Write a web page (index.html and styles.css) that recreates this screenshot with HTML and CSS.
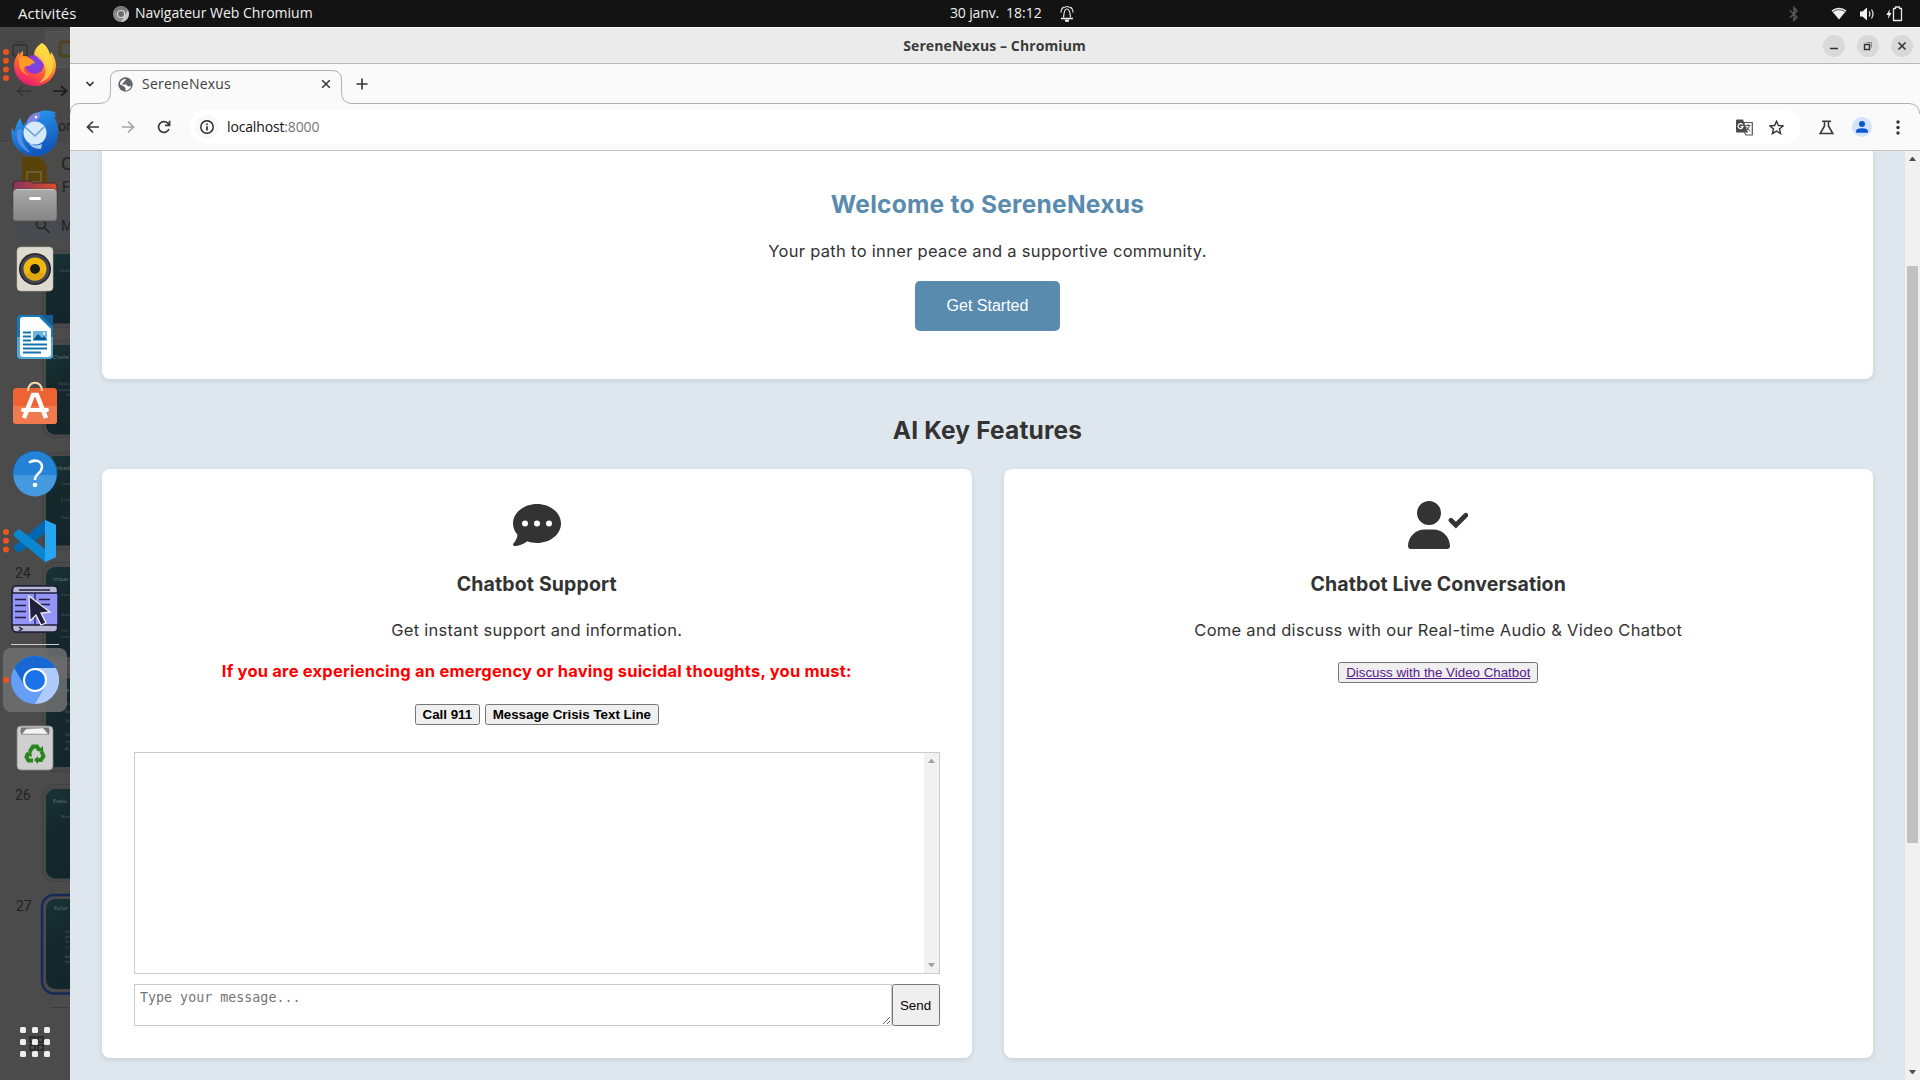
FILE: index.html
```
<!DOCTYPE html>
<html lang="fr">
<head>
<meta charset="utf-8">
<title>SereneNexus</title>
<link rel="stylesheet" href="styles.css">
</head>
<body>
<header class="topbar">
  <div class="topbar-left">
    <span class="activities">Activités</span>
    <svg class="app-icon" width="16" height="16" viewBox="0 0 16 16"><circle cx="8" cy="8" r="8" fill="#8c8c8c"/><path d="M8 8 1.2 4A8 8 0 0 1 15 4.2L8 4z" fill="#777"/><path d="M8 16 11.5 10 15 4.200A8 8 0 0 1 8 16z" fill="#c8c8c8"/><circle cx="8" cy="8" r="4" fill="#ddd"/><circle cx="8" cy="8" r="3" fill="#6c6c6c"/></svg>
    <span class="app-name">Navigateur Web Chromium</span>
  </div>
  <div class="topbar-center">
    <span class="date">30 janv.</span><span class="time">18:12</span>
    <svg width="14" height="17" viewBox="0 0 14 17" fill="none" stroke="#e8e8e8" stroke-width="1.2"><path d="M3.500 12.500C4 10 3.600 4 7 4s3 6 3.500 8.500"/><path d="M1 13.500h12" stroke-width="1.600"/><path d="M1 7.500C1 5 2 3 3.800 1.900M13 7.500C13 5 12 3 10.200 1.900M4.500 3C5 1 9 1 9.500 3"/><path d="M5.500 15.200a1.500 1.300 0 0 0 3 0z" fill="#e8e8e8"/></svg>
  </div>
  <div class="topbar-right">
    <svg width="10" height="16" viewBox="0 0 10 16" fill="none" stroke="#5a5a5a" stroke-width="1.400"><path d="M1 4.500 8 11 5 14.500V1.500L8 5 1 11.500"/></svg>
    <svg class="wifi" width="16" height="13" viewBox="0 0 16 13"><path d="M.5 3.500Q8-2 15.500 3.500L8 12.500z" fill="#f2f2f2"/><path d="M2 4.600Q8 .8 14 4.600" fill="none" stroke="#555" stroke-width="1"/></svg>
    <svg class="sound" width="16" height="14" viewBox="0 0 16 14"><path d="M1 4.500h2.500L8 .5v13L3.500 9.500H1z" fill="#f2f2f2"/><path d="M10 4.500q1.800 2.500 0 5M12.500 2.500q3 4.500 0 9" fill="none" stroke="#ddd" stroke-width="1.300"/></svg>
    <svg class="battery" width="17" height="16" viewBox="0 0 17 16"><path d="M4 3 .3 9H2.500L2 13 5.500 7H3.400z" fill="#f2f2f2"/><path d="M7.500 2.500h2V1h4v1.500h2v12h-8z" fill="none" stroke="#e6e6e6" stroke-width="1.300" stroke-linejoin="round"/></svg>
  </div>
</header>

<div class="desktop">
<nav class="dock">
  <svg class="backdrop" width="70" height="1053" viewBox="0 27 70 1053">
    <defs><linearGradient id="slide" x1="0" y1="0" x2=".5" y2="1"><stop offset="0" stop-color="#193336"/><stop offset=".4" stop-color="#15292d"/><stop offset="1" stop-color="#12252c"/></linearGradient></defs>
    <path d="M0 27h42v34q0 6 6 6h22v72H0z" fill="#484848"/><path d="M42.500 27v35M0 140.500h70" stroke="#414141"/>
    <rect x="46.500" y="31.500" width="40" height="36" rx="3" fill="#505050" stroke="#565656"/>
    <path d="M70 42h-8q-2 0-2 2v10q0 2 2 2h8" fill="none" stroke="#51431e" stroke-width="3"/>
    <rect x="13" y="45" width="14" height="11" rx="1.500" fill="none" stroke="#303030" stroke-width="1.500"/><path d="M15 42h10" stroke="#303030"/>
    <path d="M31 91H18M23 86l-5.500 5 5.500 5" fill="none" stroke="#353535" stroke-width="1.500"/><path d="M53 91h13M61 86l5.500 5-5.500 5" fill="none" stroke="#1d1d1d" stroke-width="1.700"/>
    <text x="58" y="131" class="ghost" font-size="14">or</text>
    <path d="M22 157h17l8 8v25H22z" fill="#5a4309"/><rect x="27" y="172" width="14" height="10" fill="none" stroke="#6c5d37" stroke-width="2"/>
    <text x="61" y="170" class="ghost big">C</text><text x="62" y="192" class="ghost">F</text>
    <path d="M70 212H31q-14 0-14 14t14 13h39" fill="#474a4e"/><circle cx="41" cy="224" r="4.500" fill="none" stroke="#222" stroke-width="1.500"/><path d="m44 227 6 6" stroke="#222" stroke-width="1.500"/><text x="61" y="231" class="ghost">M</text>
    <g fill="#494949" stroke="#414141"><rect x="42.500" y="250.500" width="60" height="77" rx="12"/><rect x="42.500" y="340.500" width="60" height="97" rx="12"/><rect x="42.500" y="452.500" width="60" height="97" rx="12"/><rect x="42.500" y="562.500" width="60" height="98" rx="12"/><rect x="42.500" y="674.500" width="60" height="97" rx="12"/><rect x="42.500" y="784.500" width="60" height="97" rx="12"/></g>
    <rect x="42" y="895" width="60" height="98.500" rx="12" fill="#4a4a4a" stroke="#152a59" stroke-width="2.500"/>
    <g fill="url(#slide)"><rect x="46" y="254" width="60" height="69.500" rx="2"/><rect x="46" y="345" width="60" height="89.500" rx="9"/><rect x="46" y="456" width="60" height="89.500" rx="9"/><rect x="46" y="567" width="60" height="90" rx="9"/><rect x="46" y="678" width="60" height="89" rx="9"/><rect x="46" y="789" width="60" height="89.500" rx="9"/><rect x="46" y="899" width="60" height="90" rx="9"/></g>
    <g class="slide-text"><text x="60" y="272" class="tiny">Chall</text><text x="53" y="359">Challe</text><text x="58" y="385" class="tiny">Challe</text><text x="58" y="391" class="tiny">resour</text><text x="66" y="396" class="tiny">m</text><text x="55" y="470">mbed</text><text x="61" y="485" class="tiny">Com</text><text x="61" y="501" class="tiny">E-lea</text><text x="61" y="519" class="tiny">Plan</text><text x="53" y="581">Impac</text><text x="61" y="596" class="tiny">Com</text><text x="61" y="616" class="tiny">Help</text><text x="61" y="632" class="tiny">Tele</text><text x="61" y="638" class="tiny">Love</text><text x="55" y="692">isks a</text><text x="65" y="705" class="tiny">Ris</text><text x="65" y="713" class="tiny">Ris</text><text x="65" y="722" class="tiny">Sa</text><text x="65" y="736" class="tiny">Sa</text><text x="65" y="743" class="tiny">int</text><text x="65" y="750" class="tiny">AI</text><text x="53" y="803">Evalu</text><text x="61" y="818" class="tiny">Mod</text><text x="54" y="910">Futur</text><text x="65" y="933" class="tiny">De</text><text x="65" y="938" class="tiny">pa</text><text x="65" y="943" class="tiny">Tr</text><text x="65" y="949" class="tiny">Tr</text><text x="65" y="958" class="tiny">Ad</text><text x="65" y="963" class="tiny">Im</text></g>
    <text x="15" y="578" class="ghost">24</text><text x="15" y="800" class="ghost">26</text><text x="16" y="911" class="ghost">27</text>
    <path d="M50 1007.500h20" stroke="#3c3c3c"/>
    <path d="M30 1037h5v5h-5zM38 1037h5v5h-5zM30 1045h5v5h-5zM38 1045h5v5h-5z" fill="none" stroke="#242424" stroke-width="1.500"/>
  </svg>
  <ul class="launchers">
    <li class="run4"><svg viewBox="0 0 48 48"><defs><linearGradient id="ff" x1=".8" y1="0" x2=".3" y2="1"><stop offset="0" stop-color="#fff44f"/><stop offset=".35" stop-color="#ffa62b"/><stop offset=".65" stop-color="#ff5a36"/><stop offset="1" stop-color="#e6157a"/></linearGradient><radialGradient id="ffp"><stop offset="0" stop-color="#6f50e8"/><stop offset="1" stop-color="#9631cf"/></radialGradient></defs><path d="M31 3c5 3 7 8 8 12 1-1 1-2 1-3 4 5 5 10 5 14a21 20 0 0 1-42 0c0-6 2-9 5-14v3c2-3 4-4 4-4v5c3 0 5 0 7 2l4-3c0-5 3-9 8-12z" fill="url(#ff)"/><circle cx="23.500" cy="24.500" r="9.500" fill="url(#ffp)"/><path d="M8 18c7-3 14 1 16 5-4 0-5 4-9 3-5 3-1 7 3 9-7-1-11-7-10-17z" fill="#ff9a27"/><path d="M31 3c5 3 7 8 8 12 7 9 3 24-11 28 13-12 5-20-4-28 0-5 3-9 7-12z" fill="#ffdf45" opacity=".75"/></svg></li>
    <li><svg viewBox="0 0 48 48"><defs><linearGradient id="tb" x1="0" y1="0" x2=".4" y2="1"><stop offset="0" stop-color="#2fa4f6"/><stop offset="1" stop-color="#1156bc"/></linearGradient></defs><path d="M17 11C25 0 38 0 46 4l-4 1 4 2-3 1c6 10 5 20 1 28-5 9-15 12-23 11C8 45-2 35 1 19l3 4c0-6 3-10 5-14l3 8z" fill="url(#tb)"/><path d="M16 12C19 5 24 3 29 4c1 5-2 7-6 9-3 1-4 3-6 4z" fill="#7c83e4"/><path d="M7 20c-4 9 1 20 13 24C12 36 9 30 12 21z" fill="#4b8fe8"/><circle cx="24" cy="24" r="11.500" fill="#d5ebfb"/><path d="m14 18 10 9 9-9" fill="none" stroke="#679ed4" stroke-width="1.500"/><path d="M31 35q-9 4-14-3 3 8 13 8z" fill="#a9ccf0"/><circle cx="25" cy="8" r="1.300" fill="#fff"/></svg></li>
    <li><svg viewBox="0 0 48 48"><defs><linearGradient id="fold"><stop offset="0" stop-color="#87345f"/><stop offset="1" stop-color="#d9502b"/></linearGradient><linearGradient id="grey" x2="0" y2="1"><stop offset="0" stop-color="#aaa"/><stop offset="1" stop-color="#858585"/></linearGradient></defs><path d="M2 8q0-4 3-4h13l4 2h21q3 0 3 4v20H2z" fill="url(#fold)" stroke="#492533"/><rect x="2" y="12" width="44" height="32" rx="3" fill="url(#grey)" stroke="#555" stroke-width=".7"/><path d="M5 12.500h38" stroke="#c7c7c7"/><rect x="18" y="20" width="12" height="3" rx="1.500" fill="#fff"/></svg></li>
    <li><svg viewBox="0 0 48 48"><rect x="6" y="2" width="36" height="44" rx="4" fill="#dedacf" stroke="#b6b1a6" stroke-width=".6"/><circle cx="24" cy="24" r="16" fill="#252525"/><circle cx="24" cy="24" r="14.500" fill="#445"/><circle cx="24" cy="24" r="11.500" fill="#efb80f"/><circle cx="24" cy="24" r="5" fill="#1b1b1b"/><path d="M14 29a11 11 0 0 0 20 0l-6-2a5 5 0 0 1-8 0z" fill="#d49b10" opacity=".6"/></svg></li>
    <li><svg viewBox="0 0 48 48"><rect x="6" y="2" width="36" height="44" rx="4" fill="#1978b8"/><path d="M6 24h36v18q0 4-4 4H10q-4 0-4-4z" fill="#51a8d8"/><path d="M9 7q0-3 3-3h16l12 12v25q0 3-3 3H12q-3 0-3-3z" fill="#fff"/><path d="M30 2h12v12z" fill="#145c91"/><path d="M12 19.500h8M12 23.500h8M12 27.500h8M12 31.500h24M12 35.500h24M12 39.500h18" stroke="#1673b1" stroke-width="2"/><rect x="22" y="18" width="14" height="10" rx="1" fill="#68b5e1"/><path d="m22 27 5-6 4 4 2-2 3 4z" fill="#0d568e"/><circle cx="33" cy="20.500" r="1.200" fill="#fff"/></svg></li>
    <li><svg viewBox="0 0 48 48"><g transform="translate(0 -2)"><rect x="2" y="9" width="44" height="36" rx="3.500" fill="#ee6333"/><path d="M2 27h44v14.500q0 3.500-3.500 3.500h-37Q2 45 2 41.500z" fill="#f17b51"/><path d="M17 12c0-11 14-11 14 0" fill="none" stroke="#f3d9a8" stroke-width="2.200"/><path d="M13 39 22 16h4l9 23" fill="none" stroke="#fff" stroke-width="4.500"/><rect x="10" y="29" width="28" height="4" rx="2" fill="#fff"/></g></svg></li>
    <li><svg viewBox="0 0 48 48"><circle cx="24" cy="24" r="22" fill="#2483d6" stroke="#1c5f9b"/><path d="M2.500 26h43a21.500 21.500 0 0 1-43 0z" fill="#4599de"/><path d="M18 13.500c7-4 13-1 13 4.500 0 6-7.500 7-7 13" fill="none" stroke="#fff" stroke-width="2.500"/><circle cx="24" cy="36" r="2.300" fill="#fff"/></svg></li>
    <li class="run3"><svg viewBox="0 0 48 48"><path d="M34 3 45 8v32l-11 5z" fill="#27a5f2"/><path d="M34 3v13L8 36l-5-4v-3z" fill="#0067b0"/><path d="M34 45V32L8 12l-5 4v3z" fill="#0b86d0"/><path d="M34 3 45 8v32l-11 5z" fill="#27a5f2"/></svg></li>
    <li><svg viewBox="0 0 48 48"><rect x="1" y="1" width="46" height="46" rx="5" fill="#9493fa" stroke="#211f3e" stroke-width="1.500"/><path d="M1.500 8V5q0-4 4-4h37q4 0 4 4v3zM1.500 40v3q0 4 4 4h37q4 0 4-4v-3z" fill="#b9b8d5" stroke="#211f3e" stroke-width="1.500"/><path d="M8 5h31M4 14.500h11M4 20.500h11M4 26.500h11M4 32.500h11M28 14.500h11M28 19.500h11M24 8v32" stroke="#211f3e" stroke-width="1.300"/><path d="m8 42 3 2-3 2" fill="none" stroke="#211f3e" stroke-width="1.500"/><path d="m18 11 21 16-9 1 5 10-5 2-5-10-6 6z" fill="#211f3e" stroke="#eee" stroke-width="1.300"/></svg></li>
    <li class="sep"></li>
    <li class="active run1"><svg viewBox="0 0 48 48"><circle cx="24" cy="24" r="24" fill="#669df6"/><path d="M3.200 12A24 24 0 0 1 44.800 12L36 13H24L13.600 30z" fill="#1967d2"/><path d="M24 12h20.800A24 24 0 0 1 24 48l10.400-18z" fill="#aecbfa"/><circle cx="24" cy="24" r="12" fill="#fff"/><circle cx="24" cy="24" r="10" fill="#1a73e8"/></svg></li>
    <li><svg viewBox="0 0 48 48"><rect x="6" y="2" width="36" height="44" rx="4" fill="#cfcfcf" stroke="#858585" stroke-width=".8"/><path d="M10 3.500h28q1 3 0 7H10q-1-4 0-7z" fill="#777"/><path d="m11 10 4-5 17-1 5 6z" fill="#f4f4f4" stroke="#aaa" stroke-width=".6"/><g fill="none" stroke="#2a841f" stroke-width="4"><path d="m18.500 28 3.500-5.500h4l2 3.500"/><path d="m30.500 27.500 2 4.500-2.500 4h-5"/><path d="M22 36.500h-4.500L15.500 33l2-4"/></g><path d="m26 27 6 1 0-6zM27 32v8l-4-4zM14 30l6-3 1 6z" fill="#2a841f"/></svg></li>
  </ul>
  <svg class="apps" width="30" height="30" viewBox="0 0 30 30" fill="#eee"><g id="r"><rect width="6" height="6" rx="1.500"/><rect x="12" width="6" height="6" rx="1.500"/><rect x="24" width="6" height="6" rx="1.500"/></g><use href="#r" y="12"/><use href="#r" y="24"/></svg>
</nav>

<section class="window">
  <div class="titlebar">
    <span class="window-title">SereneNexus – Chromium</span>
    <div class="window-buttons">
      <svg viewBox="0 0 22 22"><path d="M7 13.500h8"/></svg>
      <svg viewBox="0 0 22 22"><path d="M7.500 9.500h5v5h-5z" stroke-width="1.500"/><path d="M9.500 7.500h5v5" stroke="#888" stroke-width="1"/></svg>
      <svg viewBox="0 0 22 22"><path d="m7.500 7.500 7 7m0-7-7 7" stroke-width="1.600"/></svg>
    </div>
  </div>
  <div class="tabstrip">
    <svg class="tab-outline" width="1850" height="50" viewBox="0 0 1850 50"><path d="M0 50Q0 39.500 10 39.500H30Q40.500 39 40.500 28V15Q40.500 6.500 50 6.500H261Q271.500 6.500 271.500 15V28Q271.500 39.500 282 39.500H1839Q1849.500 40 1849.500 50" fill="none" stroke="#b0b0b0"/></svg>
    <svg class="search-tabs" width="10" height="8" viewBox="0 0 10 8"><path d="m1.500 2 3.500 3.500L8.500 2" fill="none" stroke="#333" stroke-width="1.700"/></svg>
    <div class="tab">
      <svg width="15" height="15" viewBox="0 0 15 15"><circle cx="7.500" cy="7.500" r="7.200" fill="#5f6368"/><path d="M8 2c-1 1 0 2-2 2.500 0 2-2 1-2 3h4c1 0 1 2 3 2l2-1c0 3-3 5-5.500 5V11L5.500 9 2 7.500C2 4 5 1.500 8 2z" fill="#fff"/></svg>
      <span class="tab-title">SereneNexus</span>
      <svg class="tab-close" width="10" height="10" viewBox="0 0 10 10"><path d="m1.200 1.200 7.600 7.600m0-7.600-7.600 7.600" stroke="#333" stroke-width="1.500"/></svg>
    </div>
    <svg class="new-tab" width="12" height="12" viewBox="0 0 12 12"><path d="M6 .5v11M.5 6h11" stroke="#333" stroke-width="1.600"/></svg>
  </div>
  <div class="toolbar">
    <svg width="14" height="14" viewBox="0 0 14 14" fill="none" stroke="#3a3a3a" stroke-width="1.700"><path d="M13 7H2M7 1.500 1.500 7 7 12.500"/></svg>
    <svg class="fwd" width="14" height="14" viewBox="0 0 14 14" fill="none" stroke="#a5a5a5" stroke-width="1.700"><path d="M1 7h11M7 1.500 12.500 7 7 12.500"/></svg>
    <svg class="reload" width="14" height="14" viewBox="0 0 14 14" fill="none" stroke="#3a3a3a" stroke-width="1.700"><path d="M12 9A5.400 5.400 0 1 1 10.800 3.200L12.500 5M12.600.8V5.400H8"/></svg>
    <div class="omnibox">
      <span class="info"><svg width="14" height="14" viewBox="0 0 14 14" fill="none" stroke="#222" stroke-width="1.400"><circle cx="7" cy="7" r="6.200"/><path d="M7 6.200V10.500M7 3.500v1.400" stroke-width="1.600"/></svg></span>
      <span class="url">localhost<i>:8000</i></span>
      <svg class="translate" width="17" height="17" viewBox="0 0 17 17"><path d="M1 .5h6l5 13H1q-1 0-1-1v-11q0-1 1-1z" fill="#4a4a4a"/><path d="M7.800 3.500h8.500v12.500H10l-1.500-2.500" fill="none" stroke="#555" stroke-width="1.200"/><path d="M6.700 5.700a2.500 2.500 0 1 0 .3 2H4.700" fill="none" stroke="#fff" stroke-width="1.200"/><path d="M9.500 6.500h5M12 5v1.500M13.500 6.500q-1 4-4 5.500M10.500 8q1 2.500 4 4" fill="none" stroke="#555"/></svg>
      <svg class="star" width="15" height="15" viewBox="0 0 15 15"><path d="m7.500 1.200 1.900 4.300 4.600.4-3.500 3.100 1.100 4.600-4.100-2.500-4.100 2.500L4.500 9 1 5.900l4.600-.4z" fill="none" stroke="#333" stroke-width="1.400"/></svg>
    </div>
    <svg class="flask" width="15" height="15" viewBox="0 0 15 15" fill="none" stroke="#3a3a3a" stroke-width="1.600"><path d="M3 1.300h9M5.500 1.300V6L1.200 13.500h12.600L9.500 6V1.300"/></svg>
    <svg class="profile" width="20" height="20" viewBox="0 0 20 20"><circle cx="10" cy="10" r="10" fill="#d3e3fd"/><circle cx="10" cy="7" r="3" fill="#0b57d0"/><path d="M4 15.800v-1.300q0-3.200 6-3.200t6 3.200v1.300z" fill="#0b57d0"/></svg>
    <svg class="menu" width="4" height="15" viewBox="0 0 4 15" fill="#333"><circle cx="2" cy="2" r="1.700"/><circle cx="2" cy="7.500" r="1.700"/><circle cx="2" cy="13" r="1.700"/></svg>
  </div>

  <div class="viewport">
    <main class="page">
      <section class="hero">
        <h2>Welcome to SereneNexus</h2>
        <p>Your path to inner peace and a supportive community.</p>
        <button class="cta">Get Started</button>
      </section>
      <h2 class="features-title">AI Key Features</h2>
      <div class="features">
        <article class="card">
          <svg class="card-icon" width="48" height="48" viewBox="0 0 512 512"><path d="M256 448c141.400 0 256-93.100 256-208S397.400 32 256 32S0 125.100 0 240c0 45.100 17.700 86.800 47.700 120.900c-1.900 24.500-11.400 46.300-21.400 62.900c-5.500 9.200-11.100 16.600-15.200 21.600c-2.100 2.500-3.700 4.400-4.900 5.700l-1.600 1.700c-4.600 4.600-5.900 11.400-3.400 17.400c2.500 6 8.300 9.900 14.800 9.900c28.700 0 57.600-8.900 81.600-19.300c22.900-10 42.400-21.900 54.300-30.600c31.800 11.500 67 17.900 104.100 17.900zM128 208a32 32 0 1 1 0 64 32 32 0 1 1 0-64zm128 0a32 32 0 1 1 0 64 32 32 0 1 1 0-64zm96 32a32 32 0 1 1 64 0 32 32 0 1 1-64 0z"/></svg>
          <h3>Chatbot Support</h3>
          <p class="lead">Get instant support and information.</p>
          <p class="warning">If you are experiencing an emergency or having suicidal thoughts, you must:</p>
          <div class="emergency"><button>Call 911</button><button>Message Crisis Text Line</button></div>
          <div class="chat-log"><div class="log-scroll"><i class="up"></i><i class="down"></i></div></div>
          <div class="chat-input"><textarea placeholder="Type your message..."></textarea><button>Send</button></div>
        </article>
        <article class="card live">
          <svg class="card-icon" width="60" height="48" viewBox="0 0 640 512"><path d="M96 128a128 128 0 1 1 256 0A128 128 0 1 1 96 128zM0 482.300C0 383.800 79.800 304 178.300 304h91.400C368.200 304 448 383.800 448 482.300c0 16.400-13.300 29.700-29.700 29.700H29.700C13.300 512 0 498.700 0 482.300z"/><path d="m458 205 53 52 105-105" fill="none" stroke="#333" stroke-width="50" stroke-linecap="round"/></svg>
          <h3>Chatbot Live Conversation</h3>
          <p class="lead">Come and discuss with our Real-time Audio &amp; Video Chatbot</p>
          <button class="video-link"><u>Discuss with the Video Chatbot</u></button>
        </article>
      </div>
    </main>
    <div class="scrollbar"><i class="up"></i><div class="thumb"></div><i class="down"></i></div>
  </div>
</section>
</div>
</body>
</html>
```
FILE: styles.css
```
* { box-sizing: border-box; }
body { margin: 0; height: 1080px; overflow: hidden; display: flex; flex-direction: column; font-family: "Open Sans", "Noto Sans", sans-serif; font-size: 14px; }
svg { display: block; flex: none; }
ul { list-style: none; margin: 0; padding: 0; }

/* system bar */
.topbar { height: 27px; flex: none; background: #131313; color: #f0f0f0; display: grid; grid-template-columns: 950px 1fr 140px; align-items: center; }
.topbar > div { display: flex; align-items: center; height: 26px; }
.topbar span { line-height: 24px; padding-bottom: 2px; }
.activities { padding-left: 18px; width: 113px; font-size: 15px; letter-spacing: .06px; }
.app-name { padding-left: 6px; }
.topbar-center { white-space: nowrap; }
.date { width: 56px; letter-spacing: -.15px; }
.time { width: 54px; letter-spacing: 0; }
.topbar-right { padding-left: 9px; }
.wifi { margin-left: 32px; }
.sound { margin-left: 12px; }
.battery { margin-left: 11px; }

.desktop { flex: 1; display: flex; min-height: 0; }

/* dock */
.dock { position: relative; width: 70px; flex: none; background: #4b4b4b; display: flex; flex-direction: column; align-items: center; justify-content: space-between; padding: 5px 0 23px; }
.backdrop { position: absolute; left: 0; top: 0; }
.ghost { fill: #222; font-family: Roboto, sans-serif; font-size: 14px; }
.ghost.big { font-size: 19px; }
.slide-text { fill: #66777a; font-family: "Open Sans", sans-serif; font-size: 5.5px; }
.slide-text .tiny { font-size: 4px; fill: #526468; }
.launchers { position: relative; display: flex; flex-direction: column; gap: 4px; width: 64px; }
.launchers li { position: relative; height: 64px; display: flex; align-items: center; justify-content: center; border-radius: 8px; }
.launchers li:nth-child(2) { margin-top: 1px; }
.launchers li svg { width: 48px; height: 48px; }
.launchers .sep { height: 1px; margin: -1px 8px -1px; background: #ccc; border-radius: 0; }
.launchers .active { background: #6f6f6fdd; }
.launchers li[class*="run"]::before { content: ""; position: absolute; left: 0; width: 6px; height: 6px; border-radius: 50%; background: #e95420; top: 29px; }
.launchers .run4::before { top: 17px !important; box-shadow: 0 8.700px #e95420, 0 17.400px #e95420, 0 26px #e95420; }
.launchers .run3::before { top: 20px !important; box-shadow: 0 8.700px #e95420, 0 17.400px #e95420; }
.apps { position: relative; }

/* browser window */
.window { flex: 1; min-width: 0; display: flex; flex-direction: column; background: #fafafa; }
.titlebar { height: 37px; flex: none; background: #ebebeb; border-top: 1px solid #fafafa; border-bottom: 1px solid #b7b7b7; display: grid; grid-template-columns: 1fr auto 1fr; align-items: center; }
.window-title { grid-column: 2; font-weight: 700; color: #3a3a3a; letter-spacing: .1px; margin-left: -1px; }
.window-buttons { display: flex; justify-content: flex-end; gap: 12px; padding-right: 7px; }
.window-buttons svg { width: 22px; height: 22px; background: #d9d9d9; border-radius: 50%; fill: none; stroke: #333; stroke-width: 1.300; }
.tabstrip { position: relative; height: 40px; flex: none; display: flex; align-items: center; padding-left: 15px; }
.tab-outline { position: absolute; left: 0; top: 0; }
.tab { display: flex; align-items: center; width: 231px; margin-left: 16px; padding: 0 11px 0 7px; }
.tab-title { flex: 1; padding: 0 0 2px 9px; color: #404040; letter-spacing: .22px; }
.new-tab { margin-left: 14px; }
.toolbar { height: 47px; flex: none; border-bottom: 1px solid #c3c3c3; display: flex; align-items: center; padding: 0 20px 0 16px; }
.fwd { margin-left: 21px; }
.reload { margin-left: 22px; }
.omnibox { flex: 1; height: 34px; border-radius: 17px; background: #fff; margin-left: 19px; display: flex; align-items: center; padding-right: 17px; }
.info { width: 24px; height: 24px; margin-left: 5px; border-radius: 50%; background: #f8f8f8; display: grid; place-items: center; }
.url { flex: 1; margin-left: 8px; padding-bottom: 2px; color: #111; letter-spacing: -.15px; }
.url i { font-style: normal; color: #777; }
.star { margin-left: 16px; }
.flask { margin-left: 18px; }
.profile { margin-left: 18px; }
.menu { margin-left: 24px; }

/* web page */
.viewport { flex: 1; min-height: 0; display: flex; background: #dfe7ee; }
.page { flex: 1; padding: 0 32px; color: #333; font-family: Inter, sans-serif; font-size: 16.5px; text-align: center; height: 929px; overflow: hidden; }
.hero, .card { background: #fff; border-radius: 8px; box-shadow: 0 2px 5px rgba(0, 0, 0, .1); }
.hero { height: 228px; border-radius: 0 0 8px 8px; padding-top: 35px; }
h2 { margin: 0; font-size: 24.5px; line-height: 36px; letter-spacing: .26px; }
.hero h2 { color: #588bae; }
.hero p { margin: 16px 0 0; line-height: 26px; letter-spacing: .31px; }
.cta { margin-top: 17px; width: 145px; height: 50px; border: 0; border-radius: 5px; background: #588bae; color: #fff; font: 16px "Liberation Sans", sans-serif; }
.features-title { margin-top: 33px; letter-spacing: .16px; }
.features { display: grid; grid-template-columns: 1fr 1fr; gap: 32px; margin-top: 21px; }
.card { height: 589px; padding: 32px; display: flex; flex-direction: column; align-items: center; }
.card-icon { fill: #333; }
h3 { margin: 19px 0 0; font-size: 19.5px; line-height: 32px; letter-spacing: .15px; }
.live h3 { letter-spacing: .1px; }
.card p { margin: 0; line-height: 26px; letter-spacing: .28px; }
.card .lead { margin-top: 17px; }
.card .warning { margin-top: 15px; color: #f00; font-weight: 700; letter-spacing: .21px; }
.card button { font: 13.333px "Liberation Sans", sans-serif; flex: none; }
.emergency { display: flex; gap: 4.500px; margin-top: 20px; height: 21px; }
.emergency button { font-weight: 700; }
.chat-log { align-self: stretch; height: 222px; margin-top: 27px; border: 1px solid #ccc; display: flex; justify-content: flex-end; }
.log-scroll { width: 15px; background: #f1f1f1; display: flex; flex-direction: column; justify-content: space-between; align-items: center; padding: 6px 0; color: #a3a3a3; }
.up, .down { border: 3.500px solid transparent; width: 7px; height: 4px; }
.up { border-top: 0; border-bottom: 4px solid currentColor; }
.down { border-bottom: 0; border-top: 4px solid currentColor; }
.chat-input { align-self: stretch; display: flex; height: 42px; margin-top: 10px; }
.chat-input textarea { flex: 1; margin: 0; border: 1px solid #ccc; padding: 5px; font: 13.333px "DejaVu Sans Mono", monospace; outline: 0; }
.chat-input button { width: 48px; padding: 1px 0; }
.card .video-link { margin-top: 19px; height: 21px; color: #551a8b; }
.scrollbar { width: 15px; background: #f1f1f1; color: #505050; display: flex; flex-direction: column; align-items: center; padding: 6px 0; }
.scrollbar .thumb { width: 11px; height: 577px; background: #c1c1c1; margin-top: 105px; }
.scrollbar .down { margin-top: auto; }
```
